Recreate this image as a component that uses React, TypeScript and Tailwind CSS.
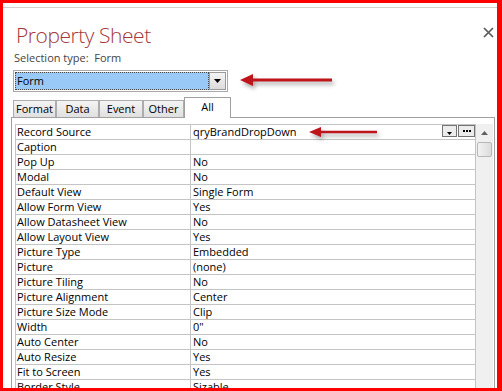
const rows: [string, string][] = [
  ['Record Source', 'qryBrandDropDown'],
  ['Caption', ''],
  ['Pop Up', 'No'],
  ['Modal', 'No'],
  ['Default View', 'Single Form'],
  ['Allow Form View', 'Yes'],
  ['Allow Datasheet View', 'No'],
  ['Allow Layout View', 'Yes'],
  ['Picture Type', 'Embedded'],
  ['Picture', '(none)'],
  ['Picture Tiling', 'No'],
  ['Picture Alignment', 'Center'],
  ['Picture Size Mode', 'Clip'],
  ['Width', '0"'],
  ['Auto Center', 'No'],
  ['Auto Resize', 'Yes'],
  ['Fit to Screen', 'Yes'],
  ['Border Style', 'Sizable'],
];

const tabs = [
  { label: 'Format', w: 'w-[43px]' },
  { label: 'Data', w: 'w-[43px]' },
  { label: 'Event', w: 'w-[44px]' },
  { label: 'Other', w: 'w-[41px]' },
];

const Arrow = ({ className, width, len, head, half, thick }: { className: string; width: number; len: number; head: number; half: number; thick: number }) => {
  const cy = half + 2;
  return (
    <svg
      className={className}
      width={width}
      height={half * 2 + 6}
      viewBox={`0 0 ${width} ${half * 2 + 6}`}
    >
      <polygon points={`2,${cy} ${2 + head},${cy - half} ${2 + head},${cy + half}`} fill="#c0141c" />
      <rect x={1 + head} y={cy - thick / 2} width={len - head} height={thick} fill="#c0141c" />
    </svg>
  );
};

export default function App() {
  return (
    <div className="relative w-[502px] h-[391px] overflow-hidden bg-white border-solid border-[#ff0000] border-t-[3px] border-l-[3px] border-r-[5px] border-b-[3px] font-['Open_Sans',sans-serif] text-black">
      <div className="pt-[4px]">
        <div className="h-px bg-[#d2d2d2]" />

        {/* Header */}
        <div className="flex items-start justify-between mt-[13px]">
          <h1 className="pl-[13px] h-[28px] text-[21px] leading-[28px] font-light tracking-[-0.45px] text-[#a4373a]">
            Property Sheet
          </h1>
          <svg className="mt-[6px] mr-[3px]" width="11" height="11" viewBox="0 0 11 11">
            <path d="M1 1 L10 10 M10 1 L1 10" stroke="#5a5a5a" strokeWidth="1.7" />
          </svg>
        </div>

        <div className="mt-[1px] pl-[11px] h-[15px] text-[11px] leading-[15px] text-[#444] whitespace-pre">
          Selection type:  Form
        </div>

        {/* Selection dropdown */}
        <div className="mt-[5px] ml-[10px] w-[215px] h-[22px] border border-[#a9a9a9] p-[1px] flex">
          <div className="flex-1 bg-[#99c9f7] border border-dotted border-[#4a4a4a] pl-[1px] text-[11px] leading-[16px]">
            Form
          </div>
          <div className="w-[17px] border border-[#9a9a9a] bg-gradient-to-b from-[#f4f4f4] to-[#dcdcdc] flex items-center justify-center">
            <svg width="7" height="4" viewBox="0 0 7 4">
              <polygon points="0,0 7,0 3.5,4" fill="#000" />
            </svg>
          </div>
        </div>

        {/* Tabs */}
        <div className="mt-[5px] ml-[10px] h-[20px] flex items-end">
          {tabs.map((t) => (
            <div
              key={t.label}
              className={`${t.w} h-[17px] border-t border-l border-r border-[#acacac] bg-gradient-to-b from-[#f4f4f4] to-[#e0e0e0] text-center text-[11px] leading-[16px]`}
            >
              {t.label}
            </div>
          ))}
          <div className="relative z-10 w-[47px] h-[21px] -mb-px bg-white border-t border-l border-r border-[#a0a0a0] text-center text-[11px] leading-[15px] pt-[1px]">
            All
          </div>
        </div>

        {/* Property grid panel */}
        <div className="ml-[8px] w-[484px] h-[300px] border-t border-l border-r border-[#a0a0a0] pt-[6px] pl-[3px] flex">
          <div className="w-[461px] border-t border-l border-r border-[#c4c4c4] self-start">
            {rows.map(([label, value], i) => (
              <div key={label} className="flex h-[15px] border-b border-[#c4c4c4] text-[11px] leading-[14px]">
                <div className="w-[175px] border-r border-[#c4c4c4] pl-[1px] whitespace-nowrap">{label}</div>
                <div className="flex-1 flex pl-[2px] whitespace-nowrap">
                  <span>{value}</span>
                  {i === 0 && (
                    <div className="ml-auto flex gap-[1px]">
                      <div className="w-[15px] h-[12px] border border-[#747474] bg-[#ececec] flex items-end justify-center pb-[1px]">
                        <svg width="5" height="3" viewBox="0 0 5 3">
                          <polygon points="0,0 5,0 2.5,3" fill="#000" />
                        </svg>
                      </div>
                      <div className="w-[17px] h-[12px] border border-[#747474] bg-[#ececec] flex items-center justify-center gap-[1px]">
                        <span className="w-[2px] h-[2px] bg-black" />
                        <span className="w-[2px] h-[2px] bg-black" />
                        <span className="w-[2px] h-[2px] bg-black" />
                      </div>
                    </div>
                  )}
                </div>
              </div>
            ))}
          </div>

          {/* Scrollbar */}
          <div className="w-[17px] self-stretch bg-[#f0f0f0] flex flex-col items-center">
            <div className="h-[17px] w-full flex items-center justify-center">
              <svg width="7" height="4" viewBox="0 0 7 4">
                <polygon points="0,4 7,4 3.5,0" fill="#606060" />
              </svg>
            </div>
            <div className="mt-[1px] w-[15px] h-[15px] rounded-[2px] border border-[#b8b8b8] bg-gradient-to-r from-[#f2f2f2] to-[#dcdcdc]" />
          </div>
        </div>
      </div>

      {/* Annotation arrows */}
      <Arrow
        className="absolute left-[235px] top-[69px] drop-shadow-[2px_3px_2px_rgba(0,0,0,0.35)]"
        width={100}
        len={93}
        head={13}
        half={6}
        thick={3}
      />
      <Arrow
        className="absolute left-[304px] top-[122px] drop-shadow-[2px_3px_2px_rgba(0,0,0,0.35)]"
        width={75}
        len={69}
        head={12}
        half={5}
        thick={2.5}
      />
    </div>
  );
}
